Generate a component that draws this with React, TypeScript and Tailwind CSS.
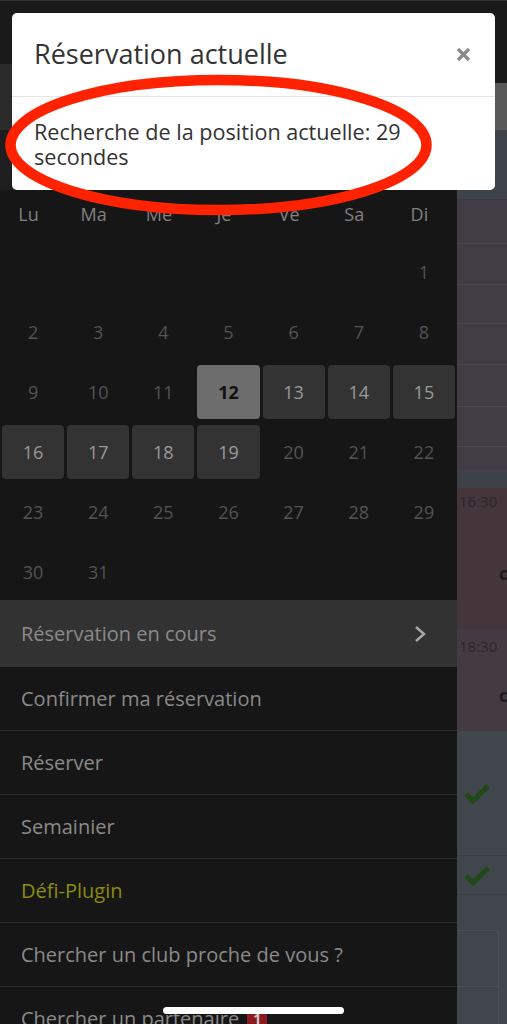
import React from "react";

const days = ["Lu", "Ma", "Me", "Je", "Ve", "Sa", "Di"];

const weeks: (number | null)[][] = [
  [null, null, null, null, null, null, 1],
  [2, 3, 4, 5, 6, 7, 8],
  [9, 10, 11, 12, 13, 14, 15],
  [16, 17, 18, 19, 20, 21, 22],
  [23, 24, 25, 26, 27, 28, 29],
  [30, 31, null, null, null, null, null],
];

const open = new Set([13, 14, 15, 16, 17, 18, 19]);

const menu = [
  { label: "Confirmer ma réservation" },
  { label: "Réserver" },
  { label: "Semainier" },
  { label: "Défi-Plugin", plugin: true },
  { label: "Chercher un club proche de vous ?" },
];

function DayCell({ day }: { day: number | null }) {
  if (day === null) return <div className="h-[54px]" />;
  if (day === 12) {
    return (
      <div className="h-[54px] rounded-[4px] bg-[#6d6d6d] flex items-center justify-center text-[18px] font-bold text-[#111]">
        {day}
      </div>
    );
  }
  if (open.has(day)) {
    return (
      <div className="h-[54px] rounded-[4px] bg-[#333333] flex items-center justify-center text-[18px] text-[#9a9a9a]">
        {day}
      </div>
    );
  }
  return (
    <div className="h-[54px] flex items-center justify-center text-[18px] text-[#535353]">
      {day}
    </div>
  );
}

function Check() {
  return (
    <svg width="26" height="21" viewBox="0 0 26 21">
      <path d="M2 11 L9 18 L24 3" fill="none" stroke="#1f4a17" strokeWidth="5" />
    </svg>
  );
}

function Sidebar() {
  return (
    <div className="w-[457px] shrink-0 bg-[#161616]">
      <div className="h-px bg-[#333]" />
      <div className="h-[63px] bg-[#1a1a1a]" />
      <div className="h-[66px] bg-[#2b2b2b]" />
      <div className="h-[60px] bg-[#1e1e1e]" />

      {/* calendar */}
      <div className="grid grid-cols-7 gap-x-[3px] gap-y-[6px] px-[2px] pb-px">
        {days.map((d) => (
          <div key={d} className="h-[49px] flex items-center justify-center pr-[9px] text-[18px] font-medium text-[#808080]">
            {d}
          </div>
        ))}
        {weeks.flat().map((d, i) => (
          <DayCell key={i} day={d} />
        ))}
      </div>

      {/* menu */}
      <div className="h-[67px] bg-[#323232] flex items-center justify-between pl-[21px] pr-[30px]">
        <span className="text-[20px] text-[#8a8a8a]">Réservation en cours</span>
        <svg width="14" height="20" viewBox="0 0 14 20">
          <path d="M3 3 L11 10 L3 17" fill="none" stroke="#a9a9a9" strokeWidth="2.4" />
        </svg>
      </div>
      {menu.map((m) => (
        <div key={m.label} className="h-[64px] border-b border-[#2c2c2c] flex items-center pl-[21px]">
          <span className={m.plugin ? "text-[20px] text-[#8c8c0e]" : "text-[20px] text-[#8a8a8a]"}>{m.label}</span>
        </div>
      ))}
      <div className="h-[64px] flex items-center pl-[21px] gap-[8px]">
        <span className="text-[20px] text-[#8a8a8a]">Chercher un partenaire</span>
        <span className="bg-[#8a1b21] text-[#cfcfcf] text-[14px] font-bold leading-none px-[6px] py-[4px] rounded-[2px]">1</span>
      </div>
    </div>
  );
}

function MainStrip() {
  return (
    <div className="flex-1 overflow-hidden">
      <div className="h-px bg-[#333]" />
      <div className="h-[82px] bg-[#1a1a1a]" />
      <div className="h-[47px] bg-[#595959]" />
      <div className="h-[70px] bg-[#3e434a] border-b border-[#383b41]" />
      <div className="bg-[#423d44]">
        <div className="h-[43px]" />
        <div className="h-[41px] border-t border-[#4b474e]" />
        <div className="h-[39px] border-t border-[#4b474e]" />
        <div className="h-[41px] border-t border-[#4b474e]" />
        <div className="h-[42px] border-t border-[#4b474e]" />
        <div className="h-[40px] border-t border-[#4b474e]" />
        <div className="h-[24px] border-t border-[#4b474e]" />
      </div>
      <div className="h-[18px] bg-[#3f4148]" />
      <div className="h-[141px] bg-[#45363c] flex flex-col pl-[2px]">
        <span className="text-[15px] text-[#2a272b] leading-[26px]">16:30</span>
        <span className="mt-[48px] pl-[40px] text-[17px] font-bold leading-[24px] text-[#1d1a1d]">c</span>
      </div>
      <div className="h-[102px] bg-[#443b42] flex flex-col pl-[2px]">
        <span className="text-[15px] text-[#2a272b] leading-[34px]">18:30</span>
        <span className="mt-[21px] pl-[40px] text-[17px] font-bold leading-[24px] text-[#1d1a1d]">c</span>
      </div>
      <div className="h-[124px] bg-[#41464d] flex items-center pl-[7px]">
        <Check />
      </div>
      <div className="h-[40px] bg-[#41464d] border-y border-[#3a3e44] flex items-center pl-[7px]">
        <Check />
      </div>
      <div className="h-[200px] bg-[#41464d] pt-[35px] pr-[8px]">
        <div className="h-full border-t border-r border-[#4b5058] rounded-tr-[4px]">
          <div className="h-[56px] border-b border-[#4b5058]" />
        </div>
      </div>
    </div>
  );
}

export default function App() {
  return (
    <div className="relative w-[507px] h-[1024px] overflow-hidden bg-[#161616] font-['Open_Sans',sans-serif]">
      <div className="flex h-full">
        <Sidebar />
        <MainStrip />
      </div>

      {/* modal */}
      <div className="absolute left-[12px] top-[13px] w-[483px] h-[177px] bg-white rounded-[5px] flex flex-col">
        <div className="h-[84px] shrink-0 border-b border-[#e5e5e5] flex items-center justify-between pl-[22px] pr-[24px]">
          <span className="text-[27px] text-[#333]">Réservation actuelle</span>
          <svg width="15" height="15" viewBox="0 0 15 15">
            <path d="M2 2 L13 13 M13 2 L2 13" stroke="#8a8a8a" strokeWidth="3.2" />
          </svg>
        </div>
        <div className="px-[22px] pt-[22px] text-[21.6px] leading-[25px] text-[#333]">
          Recherche de la position actuelle: 29 secondes
        </div>
      </div>

      {/* hand-drawn annotation */}
      <svg className="absolute left-0 top-0" width="507" height="240" viewBox="0 0 507 240">
        <ellipse cx="218.5" cy="145" rx="208" ry="65" fill="none" stroke="#ff2200" strokeWidth="10.5" />
      </svg>

      {/* home indicator */}
      <div className="absolute left-[163px] top-[1007px] w-[181px] h-[7px] rounded-full bg-white" />
    </div>
  );
}
